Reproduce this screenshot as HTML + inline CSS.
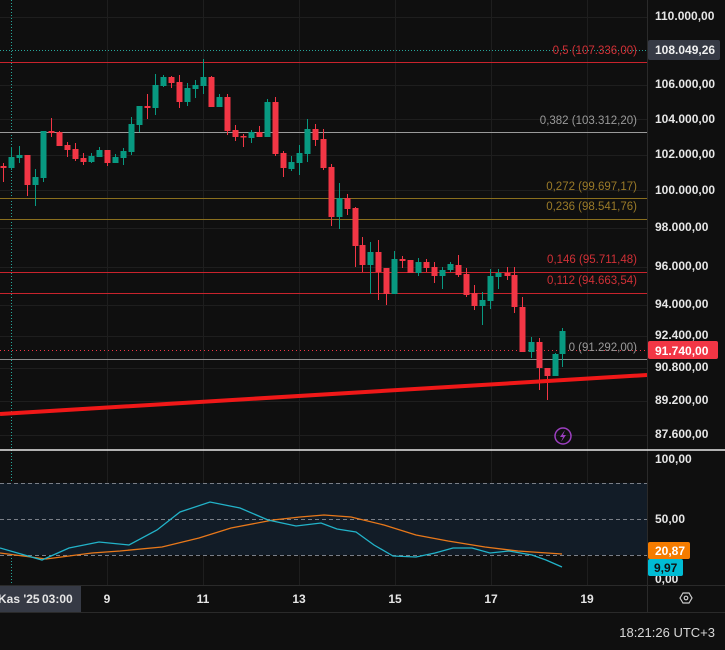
<!DOCTYPE html>
<html><head><meta charset="utf-8"><style>
html,body{margin:0;padding:0;background:#0f0f0f;width:725px;height:650px;overflow:hidden}
svg{display:block;font-family:"Liberation Sans",sans-serif}
</style></head><body>
<svg id="s" width="725" height="650" viewBox="0 0 725 650" xmlns="http://www.w3.org/2000/svg">
<rect width="725" height="650" fill="#0f0f0f"/>
<g stroke="#1e1e1e" stroke-width="1">
<line x1="0" y1="17.5" x2="647" y2="17.5"/><line x1="0" y1="85.5" x2="647" y2="85.5"/><line x1="0" y1="119.5" x2="647" y2="119.5"/><line x1="0" y1="155.5" x2="647" y2="155.5"/><line x1="0" y1="190.5" x2="647" y2="190.5"/><line x1="0" y1="228.5" x2="647" y2="228.5"/><line x1="0" y1="267.5" x2="647" y2="267.5"/><line x1="0" y1="305.5" x2="647" y2="305.5"/><line x1="0" y1="336.5" x2="647" y2="336.5"/><line x1="0" y1="368.5" x2="647" y2="368.5"/><line x1="0" y1="401.5" x2="647" y2="401.5"/><line x1="0" y1="435.5" x2="647" y2="435.5"/>
<line x1="107.5" y1="0" x2="107.5" y2="585"/><line x1="203.5" y1="0" x2="203.5" y2="585"/><line x1="299.5" y1="0" x2="299.5" y2="585"/><line x1="395.5" y1="0" x2="395.5" y2="585"/><line x1="491.5" y1="0" x2="491.5" y2="585"/><line x1="587.5" y1="0" x2="587.5" y2="585"/>
</g>
<line x1="11.5" y1="0" x2="11.5" y2="585" stroke="#26a69a" stroke-dasharray="1 2"/>
<line x1="0" y1="50.5" x2="647" y2="50.5" stroke="#26a69a" stroke-dasharray="1 2"/>
<line x1="0" y1="62.5" x2="647" y2="62.5" stroke="#c8232c"/>
<line x1="0" y1="132.5" x2="647" y2="132.5" stroke="#9a9a9a"/>
<line x1="0" y1="198.5" x2="647" y2="198.5" stroke="#8a6f1e"/>
<line x1="0" y1="219.5" x2="647" y2="219.5" stroke="#8a6f1e"/>
<line x1="0" y1="272.5" x2="647" y2="272.5" stroke="#c8232c"/>
<line x1="0" y1="293.5" x2="647" y2="293.5" stroke="#c8232c"/>
<line x1="0" y1="359.5" x2="647" y2="359.5" stroke="#8a8a8a"/>
<line x1="0" y1="350.5" x2="647" y2="350.5" stroke="#f23645" stroke-dasharray="1 3"/>
<g id="c"></g>
<line x1="0" y1="414" x2="647" y2="375" stroke="#f01818" stroke-width="4"/>
<g font-size="11.5" text-anchor="end">
<text x="637" y="54" fill="#d03036">0,5 (107.336,00)</text>
<text x="637" y="124" fill="#9a9a9a">0,382 (103.312,20)</text>
<text x="637" y="190" fill="#9a7a28">0,272 (99.697,17)</text>
<text x="637" y="210" fill="#9a7a28">0,236 (98.541,76)</text>
<text x="637" y="263" fill="#d03036">0,146 (95.711,48)</text>
<text x="637" y="284" fill="#d03036">0,112 (94.663,54)</text>
<text x="637" y="351" fill="#9a9a9a">0 (91.292,00)</text>
</g>
<circle cx="563" cy="436" r="8" fill="none" stroke="#9c3fc0" stroke-width="1.5"/>
<path d="M565 430 L560 437 L563 437 L561 442 L566 435 L563 435 Z" fill="#9c3fc0"/>
<line x1="647.5" y1="0" x2="647.5" y2="612" stroke="#2a2a2a"/>
<g font-size="12" fill="#e6e6e6" font-weight="bold">
<text x="655" y="20">110.000,00</text>
<text x="655" y="88">106.000,00</text>
<text x="655" y="123">104.000,00</text>
<text x="655" y="158">102.000,00</text>
<text x="655" y="194">100.000,00</text>
<text x="655" y="231">98.000,00</text>
<text x="655" y="270">96.000,00</text>
<text x="655" y="308">94.000,00</text>
<text x="655" y="339">92.400,00</text>
<text x="655" y="371">90.800,00</text>
<text x="655" y="404">89.200,00</text>
<text x="655" y="438">87.600,00</text>
</g>
<rect x="648" y="40" width="72" height="20" rx="2" fill="#363a45"/>
<text x="655" y="54" font-size="12" font-weight="bold" fill="#f0f0f0">108.049,26</text>
<rect x="648" y="341" width="70" height="18" rx="2" fill="#f23645"/>
<text x="655" y="355" font-size="12" font-weight="bold" fill="#fff">91.740,00</text>
<line x1="0" y1="450" x2="725" y2="450" stroke="#e8e8e8" stroke-width="1.5"/>
<rect x="0" y="483" width="647" height="72" fill="#121c27"/>
<g stroke="#7a7f88" stroke-dasharray="4 3"><line x1="0" y1="483.5" x2="647" y2="483.5"/><line x1="0" y1="519.5" x2="647" y2="519.5"/><line x1="0" y1="555.5" x2="647" y2="555.5"/></g>
<polyline fill="none" stroke="#e8781a" stroke-width="1.3" points="0,553 46,559 92,553 120,551 162,547 199,538 231,528 273,520 300,517 324,515 351,517 384,525 416,535 448,541 485,547 518,551 562,554"/>
<polyline fill="none" stroke="#22b3c9" stroke-width="1.3" points="0,548 42,560 69,548 99,542 129,545 157,530 180,512 210,502 240,508 268,520 296,526 321,523 337,529 356,532 374,545 393,556 416,557 435,553 453,548 472,548 490,553 509,551 532,555 546,560 562,567"/>
<g font-size="12" fill="#e6e6e6" font-weight="bold"><text x="655" y="463">100,00</text><text x="655" y="523">50,00</text><text x="655" y="583">0,00</text></g>
<rect x="648" y="542" width="42" height="17" rx="2" fill="#f57c00"/>
<text x="655" y="555" font-size="12" font-weight="bold" fill="#fff">20,87</text>
<rect x="648" y="559" width="35" height="17" rx="2" fill="#00bcd4"/>
<text x="654" y="572" font-size="12" font-weight="bold" fill="#111">9,97</text>
<line x1="0" y1="585.5" x2="725" y2="585.5" stroke="#2a2a2a"/>
<rect x="0" y="586" width="81" height="26" fill="#363a45"/>
<g font-size="12" fill="#e6e6e6" font-weight="bold"><text x="-2" y="603">Kas '25</text><text x="42" y="603">03:00</text>
<text x="107" y="603" text-anchor="middle">9</text><text x="203" y="603" text-anchor="middle">11</text><text x="299" y="603" text-anchor="middle">13</text><text x="395" y="603" text-anchor="middle">15</text><text x="491" y="603" text-anchor="middle">17</text><text x="587" y="603" text-anchor="middle">19</text></g>
<path d="M680 598 L683 593 L689 593 L692 598 L689 603 L683 603 Z" fill="none" stroke="#ccc" stroke-width="1.2"/><circle cx="686" cy="598" r="1.8" fill="none" stroke="#ccc" stroke-width="1.2"/>
<line x1="0" y1="612.5" x2="725" y2="612.5" stroke="#2a2a2a"/>
<text x="715" y="637" font-size="13" fill="#d8d8d8" text-anchor="end">18:21:26 UTC+3</text>
</svg>
<script>
var d=[[3,166,168,163,182,0],[11,157,168,147,170,1],[19,155,158,146,163,1],[27,155,185,155,196,0],[35,177,185,169,206,1],[43,131,178,131,182,1],[51,131,133,118,137,0],[59,132,146,131,146,0],[67,145,150,142,157,0],[75,149,159,143,161,0],[83,158,162,153,165,0],[91,156,162,153,163,1],[99,150,157,147,157,1],[107,150,163,150,166,0],[115,157,163,154,163,1],[123,151,158,148,165,1],[131,124,152,117,155,1],[139,106,125,106,132,1],[147,106,108,94,119,0],[155,85,108,74,115,1],[163,77,86,75,87,1],[171,77,83,76,88,0],[179,82,102,75,108,0],[187,88,102,83,106,1],[195,85,89,80,98,1],[203,77,86,59,94,1],[211,77,107,76,107,0],[219,97,107,94,107,1],[227,97,131,94,135,0],[235,130,137,125,141,0],[243,136,137,134,147,0],[251,132,138,130,143,1],[259,132,137,126,137,0],[267,102,137,99,137,1],[275,102,154,97,156,0],[283,153,168,151,177,0],[291,162,169,156,171,1],[299,153,163,145,175,1],[307,129,154,119,162,1],[315,129,140,124,146,0],[323,139,168,129,170,0],[331,167,217,164,226,0],[339,198,217,183,229,1],[347,198,209,194,215,0],[355,208,246,207,267,0],[362,245,265,237,272,0],[370,252,265,242,294,1],[378,252,272,240,300,0],[386,268,294,268,305,0],[394,259,294,251,294,1],[402,259,261,256,268,0],[410,260,273,260,273,0],[418,262,273,258,276,1],[426,262,268,259,272,0],[434,267,276,262,283,0],[442,270,276,267,289,1],[450,264,270,262,272,1],[458,265,275,255,277,0],[466,274,295,268,297,0],[474,293,306,285,310,0],[482,300,306,292,325,1],[490,276,301,269,309,1],[498,273,277,269,289,1],[507,273,276,267,280,0],[514,275,307,267,313,0],[522,307,352,297,352,0],[531,342,352,337,358,1],[539,342,368,338,390,0],[547,368,376,368,400,0],[555,354,376,353,376,1],[562,331,354,328,367,1]];
var g=document.getElementById('c'),h='';
d.forEach(function(c){var col=c[5]?'#089981':'#f23645';h+='<line x1="'+(c[0]+.5)+'" y1="'+c[3]+'" x2="'+(c[0]+.5)+'" y2="'+c[4]+'" stroke="'+col+'"/><rect x="'+(c[0]-2.5)+'" y="'+c[1]+'" width="6" height="'+Math.max(1.5,c[2]-c[1])+'" fill="'+col+'"/>';});
g.innerHTML=h;
</script>
</body></html>
